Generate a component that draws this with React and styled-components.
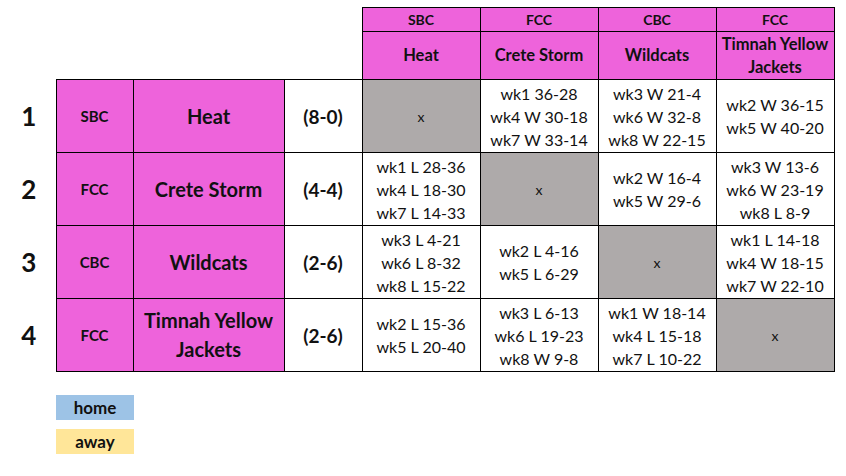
import styled, { createGlobalStyle } from 'styled-components';

const GlobalStyle = createGlobalStyle`
  body {
    margin: 0;
    background: #fff;
    font-family: Lato, "Open Sans", sans-serif;
    color: #111;
  }
`

const teams = [
  { conf: 'SBC', name: 'Heat', record: '(8-0)' },
  { conf: 'FCC', name: 'Crete Storm', record: '(4-4)' },
  { conf: 'CBC', name: 'Wildcats', record: '(2-6)' },
  { conf: 'FCC', name: 'Timnah Yellow Jackets', record: '(2-6)' },
];

const results = [
  [null, ['wk1 36-28', 'wk4 W 30-18', 'wk7 W 33-14'], ['wk3 W 21-4', 'wk6 W 32-8', 'wk8 W 22-15'], ['wk2 W 36-15', 'wk5 W 40-20']],
  [['wk1 L 28-36', 'wk4 L 18-30', 'wk7 L 14-33'], null, ['wk2 W 16-4', 'wk5 W 29-6'], ['wk3 W 13-6', 'wk6 W 23-19', 'wk8 L 8-9']],
  [['wk3 L 4-21', 'wk6 L 8-32', 'wk8 L 15-22'], ['wk2 L 4-16', 'wk5 L 6-29'], null, ['wk1 L 14-18', 'wk4 W 18-15', 'wk7 W 22-10']],
  [['wk2 L 15-36', 'wk5 L 20-40'], ['wk3 L 6-13', 'wk6 L 19-23', 'wk8 W 9-8'], ['wk1 W 18-14', 'wk4 L 15-18', 'wk7 L 10-22'], null],
];

const TeamName = ({ name }) =>
  name === 'Timnah Yellow Jackets' ? <>Timnah Yellow<br />Jackets</> : name;

const Page = styled.div`
  padding-top: 7px;
`

const Table = styled.table`
  border-collapse: collapse;
  table-layout: fixed;
  width: 834px;
`

const Blank = styled.td`
  border: none;
  padding: 0;
`

const HeadCell = styled.th`
  background: #ee63db;
  border: 1px solid #000;
  font-size: ${p => p.$small ? '14px' : '16.5px'};
  font-weight: 700;
  line-height: 23px;
  padding: 0 1px;
  text-align: center;
  vertical-align: middle;
  white-space: nowrap;
`

const HeadRow = styled.tr`
  height: ${p => p.$h}px;
`

const BodyRow = styled.tr`
  height: 73px;
`

const RankCell = styled.td`
  border: none;
  font-size: 26px;
  font-weight: 700;
  text-align: center;
  padding: 0 0 0 2px;
`

const PinkCell = styled.td`
  background: #ee63db;
  border: 1px solid #000;
  font-size: ${p => p.$big ? '20px' : '15px'};
  font-weight: 700;
  line-height: 29px;
  text-align: center;
  padding: 0 2px;
  white-space: nowrap;
`

const RecordCell = styled.td`
  border: 1px solid #000;
  font-size: 19px;
  font-weight: 700;
  text-align: center;
`

const GameCell = styled.td`
  background: ${p => p.$empty ? '#aeaaaa' : '#fff'};
  border: 1px solid #000;
  font-size: ${p => p.$empty ? '14px' : '16px'};
  line-height: 23px;
  text-align: center;
  padding: 0;
  color: #111;
  white-space: nowrap;
`

const Legend = styled.div`
  display: flex;
  flex-direction: column;
  gap: 9px;
  margin: 23px 0 0 56px;
`

const LegendTag = styled.div`
  width: 78px;
  height: 25px;
  background: ${p => p.$color};
  font-size: 17px;
  font-weight: 700;
  line-height: 25px;
  text-align: center;
`

export default function App() {
  return (
    <Page>
      <GlobalStyle />
      <Table>
        <colgroup>
          <col style={{ width: 56 }} />
          <col style={{ width: 77 }} />
          <col style={{ width: 151 }} />
          <col style={{ width: 78 }} />
          <col style={{ width: 118 }} />
          <col style={{ width: 118 }} />
          <col style={{ width: 118 }} />
          <col style={{ width: 118 }} />
        </colgroup>
        <thead>
          <HeadRow $h={24}>
            <Blank colSpan={4} />
            {teams.map((t, i) => <HeadCell key={i} $small>{t.conf}</HeadCell>)}
          </HeadRow>
          <HeadRow $h={48}>
            <Blank colSpan={4} />
            {teams.map((t, i) => <HeadCell key={i}><TeamName name={t.name} /></HeadCell>)}
          </HeadRow>
        </thead>
        <tbody>
          {teams.map((t, i) => (
            <BodyRow key={i}>
              <RankCell>{i + 1}</RankCell>
              <PinkCell>{t.conf}</PinkCell>
              <PinkCell $big><TeamName name={t.name} /></PinkCell>
              <RecordCell>{t.record}</RecordCell>
              {results[i].map((games, j) => (
                <GameCell key={j} $empty={!games}>
                  {games ? games.map(g => <div key={g}>{g}</div>) : 'x'}
                </GameCell>
              ))}
            </BodyRow>
          ))}
        </tbody>
      </Table>
      <Legend>
        <LegendTag $color="#9dc3e6">home</LegendTag>
        <LegendTag $color="#ffe699">away</LegendTag>
      </Legend>
    </Page>
  );
}
